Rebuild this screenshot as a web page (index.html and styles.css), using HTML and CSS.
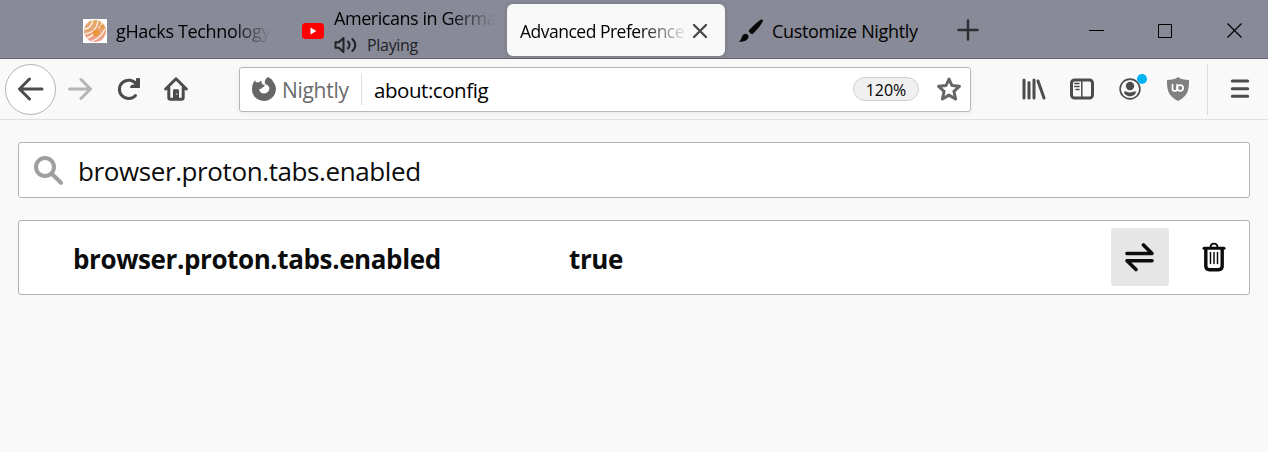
FILE: index.html
```html
<!DOCTYPE html>
<html lang="en">
<head>
  <meta charset="UTF-8" />
  <title>Advanced Preferences</title>
  <link rel="stylesheet" href="styles.css">
</head>
<body>
  <div class="titlebar">
    <div class="tab tab-first">
      <svg class="favicon" width="24" height="24" viewBox="0 0 24 24">
        <defs>
          <linearGradient id="ball" x1="0" y1="0" x2="0" y2="1">
            <stop offset="0" stop-color="#e3a860"/>
            <stop offset="1" stop-color="#eb9f90"/>
          </linearGradient>
        </defs>
        <rect width="24" height="24" fill="#fff"/>
        <circle cx="12" cy="12" r="11" fill="url(#ball)"/>
        <g fill="none" stroke="#fff0e2" stroke-width="1.4">
          <path d="M1 10C6 10 9 6 10 1M2 15c8-1 12-6 13-13M4 19c4-1 6-3 8-6M16 9c2-2 3-4 3-6M9 22c6-2 10-6 13-12"/>
        </g>
        <circle cx="13" cy="14" r="3.2" fill="#eb9636"/>
        <circle cx="19" cy="8" r="2.2" fill="#e8a04e"/>
      </svg>
      <span class="label label-ghacks">gHacks Technology</span>
    </div>
    <div class="tab tab-video">
      <svg class="favicon" width="22" height="16" viewBox="0 0 22 16">
        <rect width="22" height="16" rx="3.5" fill="#f00"/>
        <path d="M8.5 4.6v6.8L14.4 8z" fill="#fff"/>
      </svg>
      <div class="stack">
        <span class="label label-video">Americans in Germa</span>
        <span class="playing">
          <svg width="24" height="18" viewBox="0 0 24 18" fill="none" stroke="#202226" stroke-width="2" stroke-linecap="round" stroke-linejoin="round">
            <path d="M1.5 6.2h3.3L9.5 2v14l-4.7-4.2H1.5zM14 5.5c1.7 2 1.7 5 0 7M18.3 3c4 3.5 4 8.500 0 12"/>
          </svg>
          <span>Playing</span>
        </span>
      </div>
    </div>
    <div class="tab tab-active">
      <span class="label label-active">Advanced Preference</span>
      <svg width="16" height="16" viewBox="0 0 16 16" stroke="#4a4a4b" stroke-width="2.400" stroke-linecap="round">
        <path d="M2 2l12 12M14 2L2 14"/>
      </svg>
    </div>
    <div class="tab tab-last">
      <svg width="24" height="24" viewBox="0 0 24 24" fill="#060607">
        <path d="M22.300.6c1.300-.5 2 .5 1.600 1.500-1.800 4-5.300 8.200-9.700 12.500-.7.700-1.500.8-2.200.1l-1.800-1.800c-.6-.7-.5-1.500.2-2.200C14.600 6.700 18.800 2.400 22.300.6z"/>
        <path d="M4.500 15.600c1.500-1.200 3.200-1 4.300.2 1.100 1.200 1 3-.2 4.300C6.500 22.400 3 23.200 0 22.600c2.800-1.600 2.100-5 4.500-7z"/>
      </svg>
      <span class="label label-customize">Customize Nightly</span>
    </div>
    <svg class="newtab" width="22" height="22" viewBox="0 0 22 22" stroke="#2b2d31" stroke-width="2.400" stroke-linecap="round">
      <path d="M11 1.500v19M1.500 11h19"/>
    </svg>
    <div class="window-buttons">
      <svg width="16" height="16" viewBox="0 0 16 16"><path d="M0 8.500h15" stroke="#000"/></svg>
      <svg width="16" height="16" viewBox="0 0 16 16"><path d="M.5 2.500h13v13H.5z" fill="none" stroke="#000"/></svg>
      <svg width="16" height="16" viewBox="0 0 16 16"><path d="M.5 1.500l14 14M14.500 1.500l-14 14" stroke="#000" stroke-width="1.200"/></svg>
    </div>
  </div>

  <div class="toolbar">
    <div class="back">
      <svg width="26" height="24" viewBox="0 0 26 24"><path d="M24 12H1.800M11.500 2l-10 10 10 10"/></svg>
    </div>
    <svg class="forward" width="24" height="24" viewBox="0 0 24 24"><path d="M1.500 12h21M13 2.500l9.500 9.500-9.500 9.500"/></svg>
    <svg class="reload" width="24" height="24" viewBox="0 0 24 24">
      <path d="M19.500 7.600A9.200 9.200 0 1 0 18.500 18.500"/>
      <path class="solid" d="M22.200 1c.5 0 .8.300.8.800v8.200c0 .6-.4 1-1 1h-8.200c-.9 0-1.200-.8-.6-1.400l2-2 3.200.2.700-6c.1-.5.300-.8.800-.8z"/>
    </svg>
    <svg class="home" width="24" height="24" viewBox="0 0 24 24">
      <path d="M1.700 12L12 1.800 22.300 12M4.800 11v9.500c0 1 .7 1.700 1.700 1.700h11c1 0 1.700-.7 1.700-1.700V11"/>
      <path class="solid" d="M9 22v-8.500c0-.8.500-1.300 1.300-1.300h3.400c.8 0 1.300.5 1.300 1.300V22z"/>
      <circle cx="12.700" cy="17" r=".8" fill="#ddd" stroke="none"/>
    </svg>

    <div class="urlbar">
      <svg width="24" height="24" viewBox="0 0 24 24">
        <path fill="#666" d="M15.800 0c3.600 1.600 5.100 3.600 5.600 5.300.5.300.8.600 1 1.100 1.100 2 1.600 4 1.500 6.200C23.600 19 18.500 24 12 24 5.400 24 0 18.900 0 12.400 0 8.500.900 5.600 3.200 3.300l.7 2.200c.9-.3 1.900-.3 2.700 0L9.500 3.600c-.3 1.600.1 2.900 1.200 4l2.200.4c-.3 1.300-1.200 1.800-2.500 2.400-.7.400-.8 1-.7 1.600-1-.5-2.100-.2-2.500.5.600 2.700 2.600 4.300 5.100 4.100 2.900-.2 5-2.200 5-5 0-2.400-1.700-3.900-4-4.300-1.300-2.800-.2-5.200 2.500-7.300z"/>
      </svg>
      <span class="identity">Nightly</span>
      <span class="divider"></span>
      <span class="url">about:config</span>
      <span class="zoom">120%</span>
      <svg class="star" width="24" height="24" viewBox="0 0 24 24">
        <path d="M12 2l2.900 6.500 7.500.8-5.500 5 1.700 7.700-6.600-3.900L5.400 22l1.700-7.700-5.500-5 7.500-.8z"/>
      </svg>
    </div>

    <svg class="library" width="24" height="24" viewBox="0 0 24 24"><path d="M2 3v18M7 5.500V21M12 3v18M16 4l6 17"/></svg>
    <svg class="sidebar" width="24" height="24" viewBox="0 0 24 24">
      <rect x="1.500" y="3" width="21" height="18" rx="3"/>
      <path class="thin" d="M11.800 3v18"/>
      <path class="thin" d="M4.800 6.500h4.200M4.800 9.500h4.200M6 12.500h3"/>
    </svg>
    <div class="account">
      <svg width="24" height="24" viewBox="0 0 24 24">
        <circle class="ring" cx="12" cy="12" r="9.900"/>
        <circle class="solid" cx="12" cy="9" r="4.200"/>
        <path class="solid" d="M6.300 14.300c1.700-.3 2.300 1.200 5.700 1.200s4-1.500 5.700-1.200c.7 2.500-2 5-5.700 5s-6.400-2.500-5.700-5z"/>
      </svg>
      <span class="badge"></span>
    </div>
    <svg class="shield" width="24" height="24" viewBox="0 0 24 24">
      <path fill="#808080" stroke="none" d="M12 0c3 2.200 6.500 3 11 3 0 9.500-.5 15.500-11 21C1.500 18.500 1 12.500 1 3 5.500 3 9 2.200 12 0z"/>
      <path fill="none" stroke="#fff" stroke-width="1.700" d="M6.500 7.500v4.200a2.300 2.300 0 0 0 4.600 0V7.500"/>
      <circle cx="14.200" cy="11" r="2.900" fill="none" stroke="#fff" stroke-width="1.700"/>
    </svg>
    <span class="menu-divider"></span>
    <svg class="menu" width="20" height="20" viewBox="0 0 20 20"><path d="M2.300 2h15.400M2.300 9.700h15.400M2.300 17.300h15.400"/></svg>
  </div>

  <div class="content">
    <div class="search">
      <svg width="30" height="30" viewBox="0 0 30 30" fill="none" stroke="#9f9f9f">
        <circle cx="11" cy="12" r="9" stroke-width="4"/>
        <path d="M18 19l9 8.800" stroke-width="4" stroke-linecap="round"/>
      </svg>
      <span class="query">browser.proton.tabs.enabled</span>
    </div>
    <div class="pref">
      <span class="name">browser.proton.tabs.enabled</span>
      <span class="value">true</span>
      <div class="toggle">
        <svg width="30" height="30" viewBox="0 0 30 30" fill="none" stroke="#0c0c0d" stroke-width="3.600" stroke-linecap="round" stroke-linejoin="round">
          <path d="M2 11.500h25L18.500 3M27 18.800H2l9 8.700"/>
        </svg>
      </div>
      <svg class="trash" width="24" height="30" viewBox="0 0 24 30" fill="none" stroke="#0c0c0d" stroke-linecap="round">
        <path d="M2 6.200h20" stroke-width="3"/>
        <path d="M8.500 5.500c0-5.300 7-5.300 7 0" stroke-width="1.800"/>
        <path d="M3.800 7.500V24c0 2.400 1.200 3.700 3.700 3.700h9c2.500 0 3.700-1.300 3.700-3.700V7.500" stroke-width="3.400"/>
        <path d="M8.500 10.500v11M12 10.500v11M15.500 10.500v11" stroke-width="1.500"/>
      </svg>
    </div>
  </div>
</body>
</html>
```

FILE: styles.css
```css
* {
  box-sizing: border-box;
}

body {
  margin: 0;
  height: 452px;
  overflow: hidden;
  font-family: "Open Sans", "Noto Sans", sans-serif;
  background-color: #f9f9fa;
  color: #0c0c0d;
}

svg {
  display: block;
  flex: none;
}

span {
  white-space: nowrap;
}

/* tab strip */
.titlebar {
  display: flex;
  align-items: center;
  height: 59px;
  padding-left: 70px;
  background-color: #888b97;
  border-bottom: 1px solid #5f6270;
  font-size: 18px;
  color: #000;
}

.tab {
  display: flex;
  align-items: center;
  height: 52px;
  margin-top: 2px;
  border-radius: 6px;
}

.tab-first {
  width: 219px;
  padding: 1px 0 0 13px;
}

.tab-video {
  width: 218px;
  padding: 1px 0 0 13px;
}

.tab-active {
  width: 218px;
  padding: 1px 0 0 13px;
  background-color: #f9f9fa;
  box-shadow: 0 0 4px rgba(0, 0, 0, 0.15);
}

.tab-last {
  width: 232px;
  padding: 1px 0 0 14px;
}

.label {
  line-height: 26px;
  letter-spacing: -0.35px;
}

.label-ghacks {
  width: 155px;
  margin-left: 9px;
  -webkit-mask-image: linear-gradient(to right, #000 75%, transparent);
  mask-image: linear-gradient(to right, #000 75%, transparent);
}

.stack {
  display: flex;
  flex-direction: column;
  margin-left: 10px;
  padding-top: 2px;
}

.label-video {
  width: 164px;
  height: 27px;
  letter-spacing: -0.45px;
  -webkit-mask-image: linear-gradient(to right, #000 70%, transparent 98%);
  mask-image: linear-gradient(to right, #000 70%, transparent 98%);
}

.playing {
  display: flex;
  align-items: center;
  gap: 9px;
  height: 26px;
  font-size: 16px;
  letter-spacing: -0.3px;
  color: #202226;
}

.label-active {
  width: 165px;
  margin-right: 7px;
  font-size: 17.5px;
  letter-spacing: -0.5px;
  -webkit-mask-image: linear-gradient(to right, #000 72%, transparent 102%);
  mask-image: linear-gradient(to right, #000 72%, transparent 102%);
}

.label-customize {
  margin-left: 9px;
}

.newtab {
  margin-top: 2px;
}

.window-buttons {
  display: flex;
  gap: 53px;
  margin-top: 1px;
  margin-left: auto;
  margin-right: 25px;
}

/* navigation bar */
.toolbar {
  display: flex;
  align-items: center;
  height: 61px;
  padding-left: 5px;
  border-bottom: 1px solid #e0e0e1;
  fill: none;
  stroke: #4c4c4d;
  stroke-width: 3;
  stroke-linecap: round;
  stroke-linejoin: round;
}

.solid {
  fill: #4c4c4d;
  stroke: none;
}

.back {
  display: flex;
  align-items: center;
  justify-content: center;
  width: 51px;
  height: 51px;
  border: 1px solid #b4b4b5;
  border-radius: 50%;
  background-color: #fff;
}

.forward {
  margin-left: 12px;
  stroke: #b5b5b6;
}

.reload {
  margin-left: 25px;
}

.home {
  margin-left: 23px;
}

.urlbar {
  display: flex;
  align-items: center;
  width: 732px;
  height: 45px;
  margin-left: 51px;
  padding: 0 9px 0 12px;
  background-color: #fff;
  border: 1px solid #b8b8b9;
  border-radius: 3px;
  box-shadow: 0 1px 5px rgba(0, 0, 0, 0.08);
  font-size: 21px;
}

.urlbar svg {
  stroke: none;
}

.identity {
  width: 79px;
  margin-left: 6px;
  padding-top: 2px;
  letter-spacing: -0.3px;
  color: #6a6a6b;
}

.divider {
  width: 1px;
  height: 32px;
  background-color: #dededf;
}

.url {
  margin-left: 12px;
  padding-top: 2px;
  font-size: 20.5px;
  letter-spacing: -0.45px;
  color: #000;
}

.zoom {
  width: 66px;
  height: 24px;
  margin-left: auto;
  border: 1px solid #cfcfd0;
  border-radius: 12px;
  background-color: #f0f0f1;
  font-size: 16px;
  line-height: 24px;
  text-align: center;
  color: #000;
}

.urlbar .star {
  margin-left: 18px;
  stroke: #666;
  stroke-width: 3;
}

.library {
  margin-left: 51px;
}

.sidebar {
  margin-left: 24px;
}

.thin {
  stroke-width: 1.5;
}

.account {
  position: relative;
  margin-left: 24px;
}

.ring {
  stroke-width: 1.6;
}

.badge {
  position: absolute;
  top: -3px;
  right: -5px;
  width: 10px;
  height: 10px;
  border-radius: 50%;
  background-color: #00b3f4;
}

.shield {
  margin-left: 24px;
}

.menu-divider {
  width: 1px;
  height: 51px;
  margin-left: 17px;
  background-color: #dcdcdd;
}

.menu {
  margin-left: 22px;
}

/* about:config page */
.content {
  padding: 22px 18px;
}

.search {
  display: flex;
  align-items: center;
  height: 56px;
  padding-left: 15px;
  background-color: #fff;
  border: 1px solid #b3b3b4;
  border-radius: 3px;
  font-size: 26px;
}

.query {
  margin-left: 14px;
  padding-top: 2px;
  letter-spacing: -0.4px;
}

.pref {
  display: flex;
  align-items: center;
  height: 75px;
  margin-top: 22px;
  padding: 0 23px 1px 54px;
  background-color: #fff;
  border: 1px solid #b3b3b4;
  border-radius: 3px;
  font-size: 26px;
  font-weight: bold;
  letter-spacing: -0.4px;
}

.name {
  width: 496px;
  padding-top: 3px;
}

.value {
  padding-top: 3px;
}

.toggle {
  display: flex;
  align-items: center;
  justify-content: center;
  width: 58px;
  height: 58px;
  margin-left: auto;
  background-color: #e6e6e6;
  border-radius: 3px;
}

.trash {
  margin-left: 33px;
}
```
